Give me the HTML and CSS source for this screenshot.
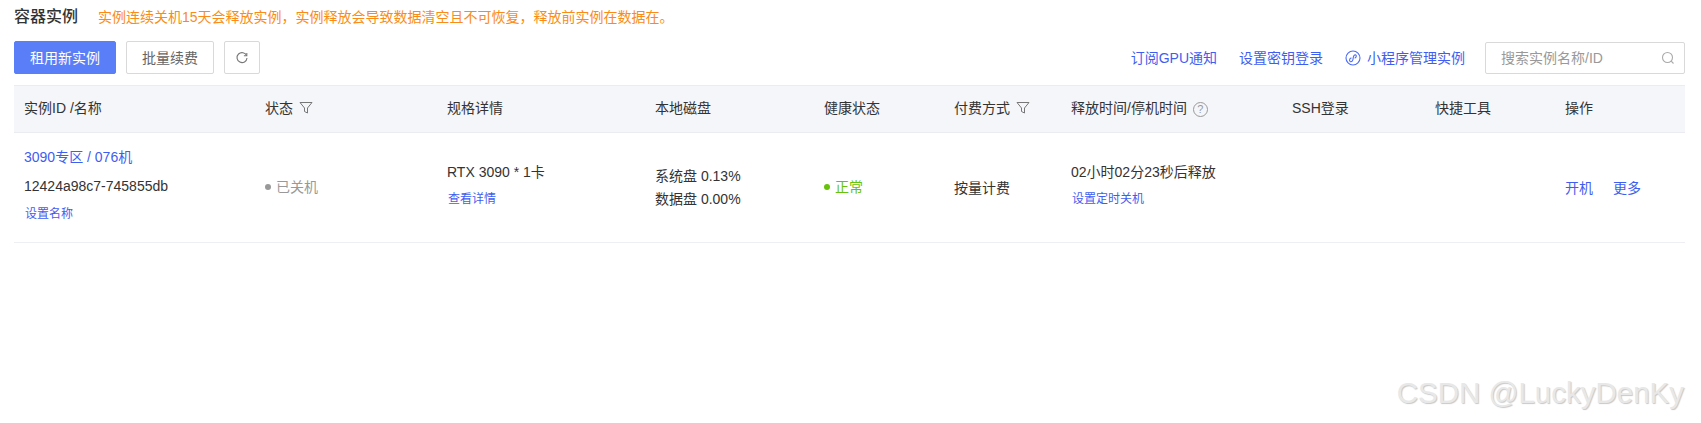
FILE: index.html
```html
<!DOCTYPE html>
<html lang="zh-CN">
<head>
    <meta charset="UTF-8">
    <title>容器实例</title>
    <link rel="stylesheet" href="styles.css">
</head>
<body>
    <div class="page">
        <div class="title-row">
            <h1 class="title">容器实例</h1>
            <span class="notice">实例连续关机15天会释放实例，实例释放会导致数据清空且不可恢复，释放前实例在数据在。</span>
        </div>
        <div class="toolbar">
            <button class="btn btn-primary">租用新实例</button>
            <button class="btn">批量续费</button>
            <button class="btn btn-icon">
                <svg width="14" height="14" viewBox="0 0 14 14" fill="none" stroke="#777" stroke-width="1.1"><path d="M11.6 4.6A5 5 0 1 0 12 7"/><path d="M11.8 1.9v2.9H8.9"/></svg>
            </button>
            <div class="toolbar-right">
                <a class="link">订阅GPU通知</a>
                <a class="link">设置密钥登录</a>
                <a class="link link-icon">
                    <svg width="16" height="16" viewBox="0 0 16 16" fill="none" stroke="#4a6cf7" stroke-width="1.1"><circle cx="8" cy="8" r="7"/><path d="M5 11.500c-1.200-2 .2-3.500 1.500-3.500M5 11.500c1.800.8 3-.5 3.200-3.500.2-2.500 1.300-3.500 2.800-3"/><path d="M11 5c.8 1.500-.2 3-1.400 3"/></svg>
                    小程序管理实例
                </a>
                <div class="search">
                    <span class="search-text">搜索实例名称/ID</span>
                    <svg width="14" height="14" viewBox="0 0 14 14" fill="none" stroke="#aaa" stroke-width="1.1"><circle cx="6.500" cy="6.500" r="5"/><path d="M10.200 10.200l2.300 2.300"/></svg>
                </div>
            </div>
        </div>
        <table class="list">
            <thead>
                <tr>
                    <th class="col-id">实例ID /名称</th>
                    <th class="col-status">状态
                        <svg class="th-icon" width="14" height="14" viewBox="0 0 14 14" fill="none" stroke="#777"><path d="M1 1.500h12L8.500 7v5l-3-1.500V7z"/></svg>
                    </th>
                    <th class="col-spec">规格详情</th>
                    <th class="col-disk">本地磁盘</th>
                    <th class="col-health">健康状态</th>
                    <th class="col-pay">付费方式
                        <svg class="th-icon" width="14" height="14" viewBox="0 0 14 14" fill="none" stroke="#777"><path d="M1 1.500h12L8.500 7v5l-3-1.500V7z"/></svg>
                    </th>
                    <th class="col-time">释放时间/停机时间
                        <span class="help">?</span>
                    </th>
                    <th class="col-ssh">SSH登录</th>
                    <th class="col-tool">快捷工具</th>
                    <th class="col-op">操作</th>
                </tr>
            </thead>
            <tbody>
                <tr>
                    <td>
                        <div class="stack">
                            <a class="link cell-line">3090专区 / 076机</a>
                            <div class="cell-line id-line">12424a98c7-745855db</div>
                            <a class="link small">设置名称</a>
                        </div>
                    </td>
                    <td><span class="state state-off"><i class="dot"></i>已关机</span></td>
                    <td>
                        <div class="stack">
                            <div class="cell-line">RTX 3090 * 1卡</div>
                            <a class="link small">查看详情</a>
                        </div>
                    </td>
                    <td>
                        <div class="disk-line">系统盘 0.13%</div>
                        <div>数据盘 0.00%</div>
                    </td>
                    <td><span class="state state-ok"><i class="dot"></i>正常</span></td>
                    <td>按量计费</td>
                    <td>
                        <div class="stack">
                            <div class="cell-line">02小时02分23秒后释放</div>
                            <a class="link small">设置定时关机</a>
                        </div>
                    </td>
                    <td></td>
                    <td></td>
                    <td class="ops"><a class="link">开机</a><a class="link">更多</a></td>
                </tr>
            </tbody>
        </table>
    </div>
    <div class="watermark">CSDN @LuckyDenKy</div>
</body>
</html>
```

FILE: styles.css
```css
body, html {
    margin: 0; padding: 0; height: 100%; background: white; overflow: hidden;
    font-family: 'Liberation Sans', 'Noto Sans CJK SC', sans-serif; font-size: 14px; line-height: 20px; color: #333;
}
.page {
    padding: 5px 16px 0 14px;
}
.title-row {
    display: flex; align-items: center; gap: 20px; height: 24px;
}
.title {
    margin: 0 0 1px; font-size: 16px; font-weight: 500; color: #333;
}
.notice {
    color: #fa8c16;
}
.toolbar {
    display: flex; align-items: center; gap: 10px; margin-top: 12px; height: 33px;
}
.btn {
    height: 33px; padding: 0 15px; font: inherit; color: #666; background: white;
    border: 1px solid #d9d9d9; border-radius: 2px;
}
.btn-primary {
    width: 102px; padding: 0; color: white; background: #597ef7; border-color: #597ef7;
}
.btn-icon {
    width: 36px; padding: 0; display: flex; justify-content: center; align-items: center;
}
.toolbar-right {
    margin-left: auto; display: flex; align-items: center; gap: 22px;
}
.link {
    color: #3f5ef0;
}
.link-icon {
    display: flex; align-items: center; gap: 6px;
}
.search {
    display: flex; justify-content: space-between; align-items: center; box-sizing: border-box;
    width: 200px; height: 32px; padding: 0 9px 0 15px; margin-left: -2px;
    border: 1px solid #d9d9d9; border-radius: 2px;
}
.search-text {
    color: #999;
}
.list {
    width: 1671px; margin-top: 11px; border-collapse: collapse; table-layout: fixed;
}
.list th {
    height: 47px; padding: 0 10px 2px; box-sizing: border-box; text-align: left; font-weight: 400;
    background: #f5f6fa; border-top: 1px solid #eaecf2; border-bottom: 1px solid #eaecf2;
}
.list td {
    height: 110px; padding: 0 10px; box-sizing: border-box; vertical-align: middle;
    border-bottom: 1px solid #eeeff3;
}
.col-id { width: 241px; }
.col-status { width: 182px; }
.col-spec { width: 208px; }
.col-disk { width: 169px; }
.col-health { width: 130px; }
.col-pay { width: 117px; }
.col-time { width: 221px; }
.col-ssh { width: 143px; }
.col-tool { width: 130px; }
.col-op { width: 130px; }
.th-icon {
    vertical-align: -2px; margin-left: 2px;
}
.help {
    display: inline-block; width: 15px; height: 15px; margin-left: 2px; box-sizing: border-box;
    border: 1px solid #999; border-radius: 50%; color: #999; font-size: 11px; line-height: 13px; text-align: center;
}
.stack {
    padding-bottom: 5px;
}
.cell-line {
    display: block; margin-bottom: 9px;
}
.id-line {
    margin-bottom: 10px;
}
.disk-line {
    margin-bottom: 3px;
}
.small {
    display: block; padding-left: 1px; font-size: 12px; line-height: 17px;
}
.state {
    display: flex; align-items: center; gap: 5px; padding-bottom: 1px;
}
.dot {
    width: 6px; height: 6px; border-radius: 50%; background: currentColor;
}
.state-off {
    color: #999;
}
.state-ok {
    color: #67c20a;
}
.ops .link {
    margin-right: 20px;
}
.watermark {
    position: absolute; right: 17px; bottom: 14px; line-height: 32px;
    font-size: 29.500px; color: #e8e8e8; text-shadow: 1px 1px 1px #c8c8c8;
}
```
